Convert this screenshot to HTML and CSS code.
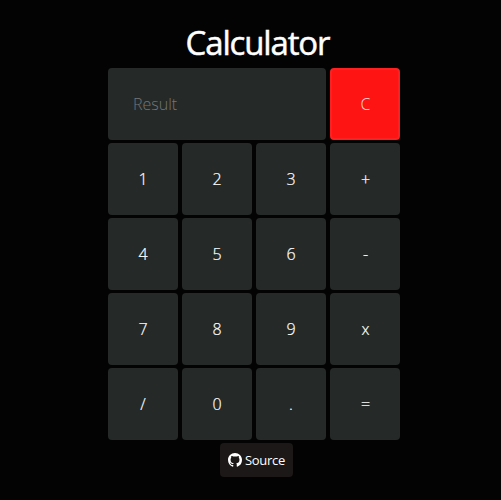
FILE: index.html
```html
<!DOCTYPE html>
<html lang="en">
<head>
<meta charset="utf-8">
<title>Calculator</title>
<link rel="stylesheet" href="styles.css">
</head>
<body>
<main class="calculator">
<h1 class="title">Calculator</h1>
<div class="keys">
<input class="result" type="text" placeholder="Result" readonly>
<button class="key clear">C</button>
<button class="key">1</button><button class="key">2</button><button class="key">3</button><button class="key operator">+</button>
<button class="key">4</button><button class="key">5</button><button class="key">6</button><button class="key operator">-</button>
<button class="key">7</button><button class="key">8</button><button class="key">9</button><button class="key operator">x</button>
<button class="key">/</button><button class="key">0</button><button class="key">.</button><button class="key operator">=</button>
</div>
<a class="source" href="#"><svg class="icon" viewBox="0 0 16 16" aria-hidden="true"><path fill="currentColor" d="M8 0C3.58 0 0 3.58 0 8c0 3.54 2.29 6.53 5.47 7.59.4.07.55-.17.55-.38 0-.19-.01-.82-.01-1.49-2.01.37-2.53-.49-2.69-.94-.09-.23-.48-.94-.82-1.13-.28-.15-.68-.52-.01-.53.63-.01 1.08.58 1.23.82.72 1.21 1.87.87 2.33.66.07-.52.28-.87.51-1.07-1.78-.2-3.64-.89-3.64-3.95 0-.87.31-1.59.82-2.15-.08-.2-.36-1.02.08-2.12 0 0 .67-.21 2.2.82.64-.18 1.32-.27 2-.27s1.36.09 2 .27c1.53-1.04 2.2-.82 2.2-.82.44 1.1.16 1.92.08 2.12.51.56.82 1.27.82 2.15 0 3.07-1.87 3.75-3.65 3.95.29.25.54.73.54 1.48 0 1.07-.01 1.93-.01 2.2 0 .21.15.46.55.38A8.01 8.01 0 0 0 16 8c0-4.42-3.58-8-8-8z"/></svg>Source</a>
</main>
</body>
</html>
```
FILE: styles.css
```css
* { box-sizing: border-box; }
body {
  margin: 0;
  background: #040303;
  color: #fff;
  font-family: "Open Sans", sans-serif;
}
.calculator {
  width: 292px;
  margin-left: 108px;
  padding-top: 18px;
  display: flex;
  flex-direction: column;
  align-items: center;
}
.title {
  margin: 0 0 1px 7px;
  font-size: 33px;
  line-height: 49px;
  font-weight: 400;
  letter-spacing: -1.15px;
  -webkit-text-stroke: 0.5px #fff;
}
.keys {
  display: grid;
  grid-template-columns: repeat(4, 70px);
  grid-auto-rows: 72px;
  gap: 3px 4px;
}
.result, .key {
  border: 0;
  border-radius: 4px;
  background: #252a28;
  color: #fff;
  font: 300 16px "Open Sans", sans-serif;
  padding: 0;
}
.key { -webkit-text-stroke: 0.2px currentColor; }
.operator, .clear { padding-left: 1px; }
.result {
  grid-column: span 3;
  width: 100%;
  padding: 0 25px;
}
.result::placeholder { color: #757575; opacity: 1; }
.clear {
  background: #ff1414;
  border: 2px solid #ff2020;
  color: #ffdede;
  -webkit-text-stroke: 0;
}
.source {
  margin: 3px 0 0 5px;
  width: 73px;
  height: 34px;
  border-radius: 4px;
  background: #1c1817;
  color: #fff;
  font-size: 13px;
  letter-spacing: -0.3px;
  text-decoration: none;
  display: flex;
  align-items: center;
  justify-content: center;
  gap: 3px;
}
.icon { width: 14px; height: 14px; }
```
